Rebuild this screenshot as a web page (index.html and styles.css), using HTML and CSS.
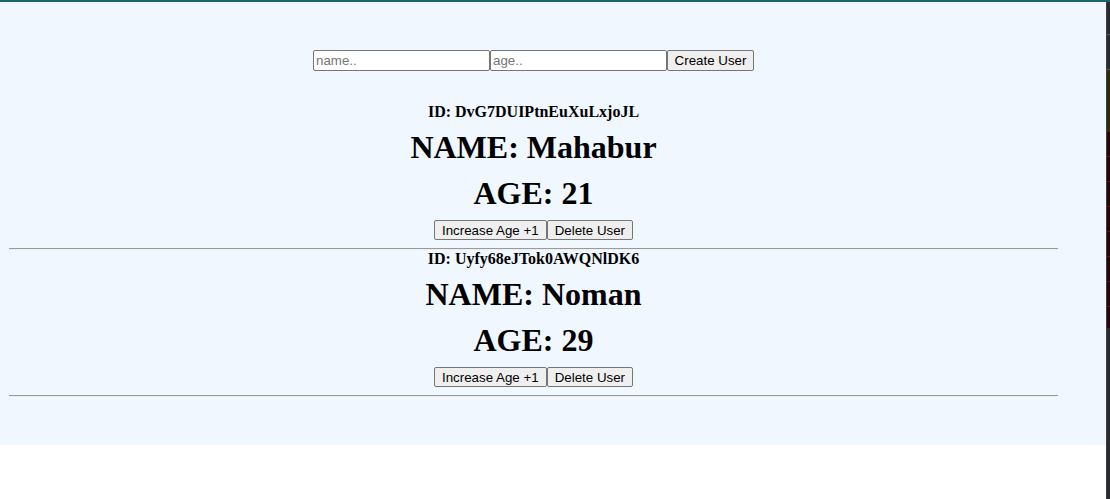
FILE: index.html
```html
<!DOCTYPE html>
<html>
<head>
<meta charset="utf-8">
<link rel="stylesheet" href="styles.css">
</head>
<body>
<div class="topbar"></div>
<div class="frame">
  <div class="page">
    <div class="app">
      <div class="content">
        <div class="form">
          <input class="field" type="text" placeholder="name..">
          <input class="field" type="number" placeholder="age..">
          <button class="btn btn-create">Create User</button>
        </div>
        <div class="users">
          <div class="user">
            <h4 class="uid">ID: DvG7DUIPtnEuXuLxjoJL</h4>
            <h1 class="big">NAME: Mahabur</h1>
            <h1 class="big">AGE: 21</h1>
            <div class="actions">
              <button class="btn">Increase Age +1</button><button class="btn">Delete User</button>
            </div>
            <hr class="rule">
          </div>
          <div class="user">
            <h4 class="uid">ID: Uyfy68eJTok0AWQNlDK6</h4>
            <h1 class="big">NAME: Noman</h1>
            <h1 class="big">AGE: 29</h1>
            <div class="actions">
              <button class="btn">Increase Age +1</button><button class="btn">Delete User</button>
            </div>
            <hr class="rule">
          </div>
        </div>
      </div>
    </div>
  </div>
  <div class="strip">
    <div class="seg s-dark1"></div>
    <div class="seg s-tick"></div>
    <div class="seg s-dark2"></div>
    <div class="seg s-tick"></div>
    <div class="seg s-olive"></div>
    <div class="seg s-red"></div>
    <div class="seg s-rest"></div>
  </div>
</div>
</body>
</html>
```
FILE: styles.css
```css
html, body {
  margin: 0;
  padding: 0;
  height: 100%;
  overflow: hidden;
  background: #ffffff;
}
body {
  font-family: "Liberation Serif", "Times New Roman", serif;
  color: #000;
}
.topbar {
  height: 2px;
  background: #1d6468;
}
.frame {
  display: flex;
  height: 497px;
}
.page {
  width: 1106px;
  flex: none;
}
.app {
  background: #f0f7fe;
  padding: 48px 0 48px 9px;
}
.content {
  width: 1049px;
}
.form {
  display: flex;
  justify-content: center;
  height: 21px;
  margin-bottom: 32px;
}
.field {
  box-sizing: border-box;
  width: 177px;
  height: 21px;
  margin: 0;
  padding: 1px 2px;
  border: 1px solid #767676;
  border-radius: 2px;
  background: #fff;
  font-family: "Liberation Sans", Arial, sans-serif;
  font-size: 13.33px;
  -moz-appearance: textfield;
}
.field::-webkit-outer-spin-button,
.field::-webkit-inner-spin-button {
  -webkit-appearance: none;
  margin: 0;
}
.field::placeholder {
  color: #757575;
}
.btn {
  box-sizing: border-box;
  height: 21px;
  margin: 0;
  padding: 1px 7px;
  border: 1px solid #767676;
  border-radius: 2px;
  background: #efefef;
  font-family: "Liberation Sans", Arial, sans-serif;
  font-size: 13.33px;
  color: #000;
}
.btn-create {
  width: 87px;
  padding: 1px 0;
}
.user {
  text-align: center;
}
.uid {
  font-size: 16px;
  font-weight: bold;
  margin: 0;
  line-height: 17px;
}
.big {
  font-size: 32px;
  font-weight: bold;
  margin: 9px 0 0;
  line-height: 37px;
}
.actions {
  margin-top: 8px;
  display: flex;
  justify-content: center;
  height: 20px;
}
.actions .btn {
  height: 20px;
  padding: 0 7px;
}
.rule {
  margin: 8px 0 0;
  height: 0;
  border: none;
  border-top: 1px solid #9a9a9a;
  border-bottom: 1px solid #eeeeee;
}
.strip {
  width: 4px;
  flex: none;
  background: #2a2b2e;
  border-left: 1px solid #3b3e42;
  box-sizing: border-box;
  display: flex;
  flex-direction: column;
}
.seg { flex: none; }
.s-dark1 { height: 32px; }
.s-tick { height: 1px; background: #5a5d62; }
.s-dark2 { height: 34px; }
.s-olive { height: 62px; background: #332c00; }
.s-red {
  height: 196px;
  background: repeating-linear-gradient(#2e0203 0 24px, #6b0c10 24px 25px);
}
.s-rest { flex: 1; }
```
